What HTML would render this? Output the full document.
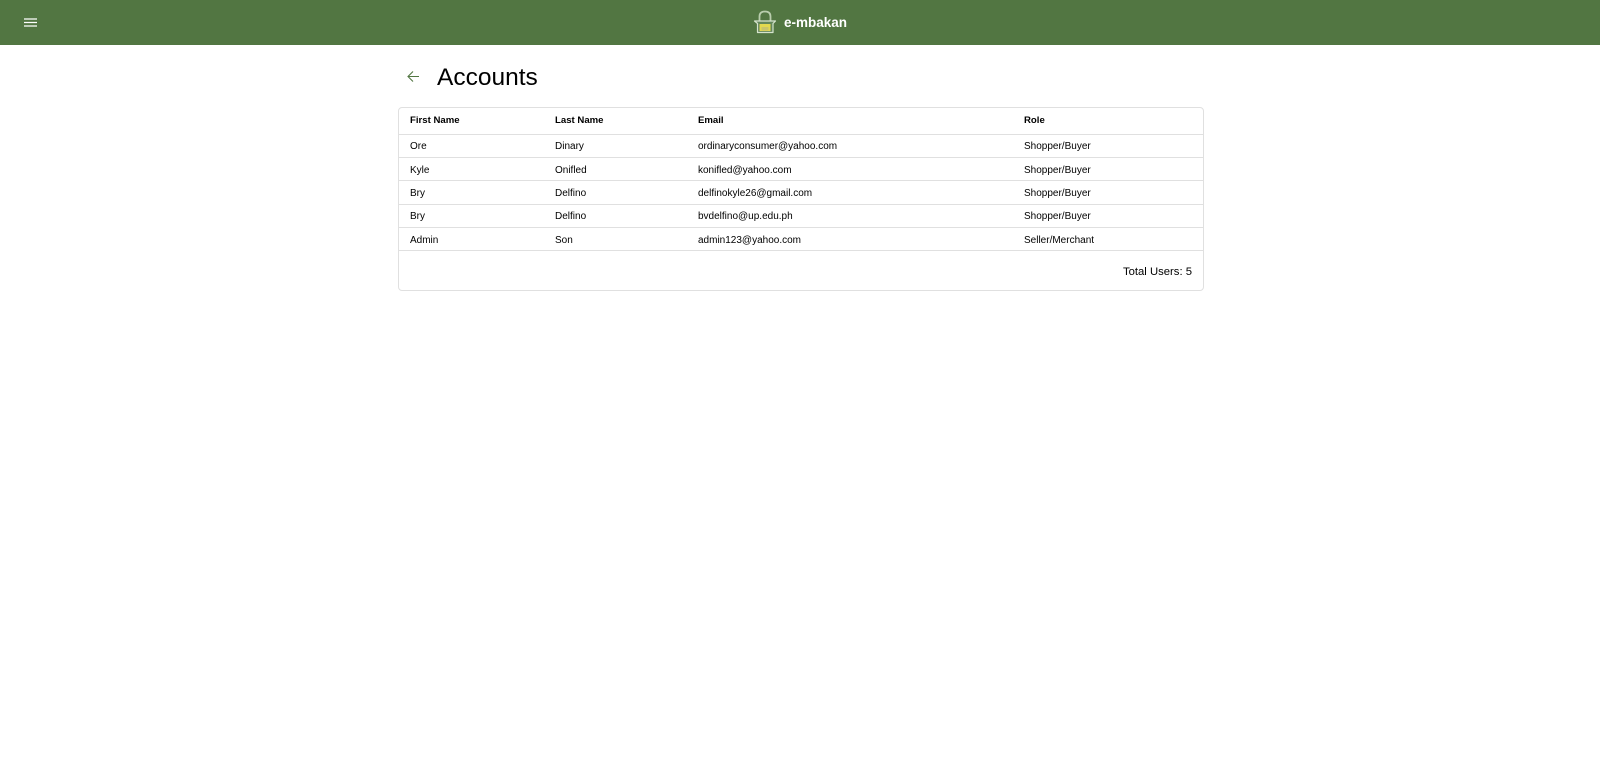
<!DOCTYPE html>
<html><head><meta charset="utf-8"><title>Accounts</title>
<style>
html,body{margin:0;padding:0;width:1600px;height:767px;overflow:hidden;background:#fff;font-family:"Liberation Sans",sans-serif;color:#000}
.abs{position:absolute;white-space:nowrap}
#bar{position:absolute;left:0;top:0;width:1600px;height:45px;background:#527642}
#card{position:absolute;left:398px;top:107px;width:804px;height:182px;border:1px solid #e0e0e0;border-radius:4px;box-sizing:content-box}
.ln{position:absolute;left:399px;width:804px;height:1px;background:#e0e0e0}
.t{position:absolute;font-size:10px;line-height:14px;white-space:nowrap}
.h{font-weight:bold;font-size:9.600px}
</style></head><body>
<div id="bar"></div>
<svg class="abs" style="left:24px;top:18px" width="14" height="10" viewBox="0 0 14 10"><path d="M0 1h13M0 4.500h13M0 8h13" stroke="#fff" stroke-width="1.300" fill="none"/></svg>
<svg class="abs" style="left:753px;top:10px" width="24" height="25" viewBox="0 0 24 25">
<path d="M6.500 11V6.500C6.500 3 8.500 1.500 12 1.500S17.500 3 17.500 6.500V11" stroke="#b9cdad" stroke-width="1.800" fill="none"/>
<path d="M1.500 11H22.500L20 13.500V22.500H4.500V13.500Z" fill="#64875a" stroke="#d5e3cd" stroke-width="1.200" stroke-linejoin="round"/>
<rect x="6.500" y="14" width="11" height="7" fill="#e3d94f"/>
<rect x="8.500" y="17" width="7" height="3.500" fill="#c9c56a"/>
</svg>
<div class="abs" style="left:784px;top:14px;font-size:13.500px;line-height:18px;font-weight:bold;color:#fff">e-mbakan</div>
<svg class="abs" style="left:405px;top:69px" width="16" height="16" viewBox="0 0 16 16"><path d="M14 7.500H3M8 2.500L3 7.500L8 12.500" stroke="#527642" stroke-width="1.100" fill="none"/></svg>
<div class="abs" style="left:437px;top:62.500px;font-size:24.500px;line-height:30px;color:#000">Accounts</div>
<div id="card"></div>
<div class="ln" style="top:134px"></div>
<div class="ln" style="top:157px"></div>
<div class="ln" style="top:180px"></div>
<div class="ln" style="top:204px"></div>
<div class="ln" style="top:227px"></div>
<div class="ln" style="top:250px"></div>
<div class="t h" style="left:410px;top:114px">First Name</div>
<div class="t h" style="left:555px;top:114px">Last Name</div>
<div class="t h" style="left:698px;top:114px">Email</div>
<div class="t h" style="left:1024px;top:114px">Role</div>
<div class="t" style="left:410px;top:140px">Ore</div>
<div class="t" style="left:555px;top:140px">Dinary</div>
<div class="t" style="left:698px;top:140px">ordinaryconsumer@yahoo.com</div>
<div class="t" style="left:1024px;top:140px">Shopper/Buyer</div>
<div class="t" style="left:410px;top:164px">Kyle</div>
<div class="t" style="left:555px;top:164px">Onifled</div>
<div class="t" style="left:698px;top:164px">konifled@yahoo.com</div>
<div class="t" style="left:1024px;top:164px">Shopper/Buyer</div>
<div class="t" style="left:410px;top:187px">Bry</div>
<div class="t" style="left:555px;top:187px">Delfino</div>
<div class="t" style="left:698px;top:187px">delfinokyle26@gmail.com</div>
<div class="t" style="left:1024px;top:187px">Shopper/Buyer</div>
<div class="t" style="left:410px;top:210px">Bry</div>
<div class="t" style="left:555px;top:210px">Delfino</div>
<div class="t" style="left:698px;top:210px">bvdelfino@up.edu.ph</div>
<div class="t" style="left:1024px;top:210px">Shopper/Buyer</div>
<div class="t" style="left:410px;top:234px">Admin</div>
<div class="t" style="left:555px;top:234px">Son</div>
<div class="t" style="left:698px;top:234px">admin123@yahoo.com</div>
<div class="t" style="left:1024px;top:234px">Seller/Merchant</div>
<div class="abs" style="right:408px;top:265px;font-size:11.300px;line-height:14px">Total Users: 5</div>
</body></html>
